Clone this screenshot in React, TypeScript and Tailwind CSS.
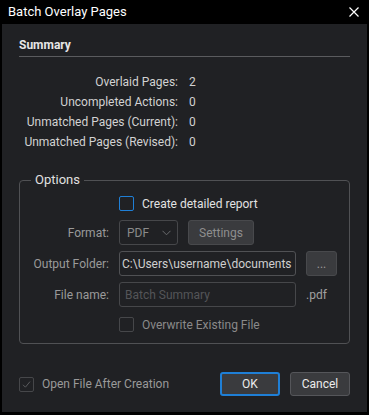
// Batch Overlay Pages dialog
const summary = [
  { label: "Overlaid Pages:", value: "2" },
  { label: "Uncompleted Actions:", value: "0" },
  { label: "Unmatched Pages (Current):", value: "0" },
  { label: "Unmatched Pages (Revised):", value: "0" },
];

function Checkbox({ blue, checked }: { blue?: boolean; checked?: boolean }) {
  return (
    <div
      className={`w-[15px] h-[15px] rounded-[2px] border shrink-0 flex items-center justify-center ${
        blue ? "border-[#1f7fd6]" : "border-[#46474a]"
      }`}
    >
      {checked ? (
        <svg width="11" height="11" viewBox="0 0 11 11" fill="none">
          <path d="M2 5.8 L4.4 8.2 L9 2.6" stroke="#5a5b5e" strokeWidth="1" />
        </svg>
      ) : null}
    </div>
  );
}

export default function App() {
  return (
    <div
      className="w-[369px] h-[415px] bg-black flex flex-col text-[12px]"
      style={{ fontFamily: "Roboto, 'Noto Sans', sans-serif" }}
    >
      {/* Barra de título */}
      <div className="h-[24px] shrink-0 flex items-center justify-between pl-[8px] pr-[10px]">
        <span className="text-[13px] text-white">Batch Overlay Pages</span>
        <svg width="10" height="10" viewBox="0 0 10 10">
          <path d="M0.5 0.5 L9.5 9.5 M9.5 0.5 L0.5 9.5" stroke="#ffffff" strokeWidth="1.2" />
        </svg>
      </div>

      {/* Corpo */}
      <div className="flex-1 mx-[2px] mb-[3px] bg-[#202124] px-[17px] pt-[13px] flex flex-col">
        <div className="pb-[3px] border-b border-[#5a5b5e] font-bold text-[#e6e6e6] leading-[16px]">
          Summary
        </div>

        <div className="mt-[15px] flex flex-col">
          {summary.map((row) => (
            <div key={row.label} className="flex h-[20px] items-center text-[#d2d2d2]">
              <span className="w-[159px] text-right">{row.label}</span>
              <span className="ml-[11px]">{row.value}</span>
            </div>
          ))}
        </div>

        {/* Opções */}
        <fieldset className="mt-[20px] border border-[#505154] rounded-[4px] pb-[11px] min-w-0">
          <legend className="ml-[11px] px-[4px] text-[13px] text-[#e0e0e0] leading-[16px]">Options</legend>

          <div className="flex items-center mt-[8px] ml-[99px] h-[15px]">
            <Checkbox blue />
            <span className="ml-[8px] text-[#e2e2e2]">Create detailed report</span>
          </div>

          <div className="flex items-center mt-[9px] h-[25px]">
            <span className="w-[89px] text-right text-[#9a9a9a]">Format:</span>
            <div className="ml-[10px] w-[59px] h-[25px] border border-[#46474a] rounded-[3px] flex items-center justify-between pl-[7px] pr-[6px] text-[#8a8a8a]">
              <span>PDF</span>
              <svg width="9" height="6" viewBox="0 0 9 6" fill="none">
                <path d="M0.5 0.8 L4.5 4.8 L8.5 0.8" stroke="#6a6b6e" strokeWidth="1" />
              </svg>
            </div>
            <div className="ml-[10px] w-[66px] h-[25px] bg-[#3a3b3e] border border-[#48494c] rounded-[3px] flex items-center justify-center text-[#8e8e8e]">
              Settings
            </div>
          </div>

          <div className="flex items-center mt-[6px] h-[25px]">
            <span className="w-[89px] text-right text-[#9a9a9a]">Output Folder:</span>
            <div className="ml-[10px] w-[177px] h-[25px] border border-[#505154] rounded-[3px] flex items-center px-[2px] text-[#cfcfcf] overflow-hidden whitespace-nowrap">
              C:\Users\username\documents
            </div>
            <div className="ml-[10px] w-[31px] h-[25px] bg-[#3a3b3e] border border-[#48494c] rounded-[3px] flex items-center justify-center text-[#9a9a9a]">
              ...
            </div>
          </div>

          <div className="flex items-center mt-[6px] h-[25px]">
            <span className="w-[89px] text-right text-[#9a9a9a]">File name:</span>
            <div className="ml-[10px] w-[177px] h-[25px] border border-[#46474a] rounded-[3px] flex items-center px-[5px] text-[#545558]">
              Batch Summary
            </div>
            <span className="ml-[10px] text-[#a0a0a0]">.pdf</span>
          </div>

          <div className="flex items-center mt-[10px] ml-[99px] h-[15px]">
            <Checkbox />
            <span className="ml-[8px] text-[#8a8a8a]">Overwrite Existing File</span>
          </div>
        </fieldset>

        {/* Rodapé */}
        <div className="mt-[28px] flex items-center">
          <div className="flex items-center">
            <Checkbox checked />
            <span className="ml-[8px] text-[#9a9a9a]">Open File After Creation</span>
          </div>
          <div className="ml-auto flex gap-[10px]">
            <div className="w-[60px] h-[24px] bg-[#3a3b3e] border-2 border-[#1f7fd6] rounded-[3px] flex items-center justify-center text-[#ececec]">
              OK
            </div>
            <div className="w-[60px] h-[24px] bg-[#3a3b3e] border border-[#55565a] rounded-[3px] flex items-center justify-center text-[#ececec]">
              Cancel
            </div>
          </div>
        </div>
      </div>
    </div>
  );
}
